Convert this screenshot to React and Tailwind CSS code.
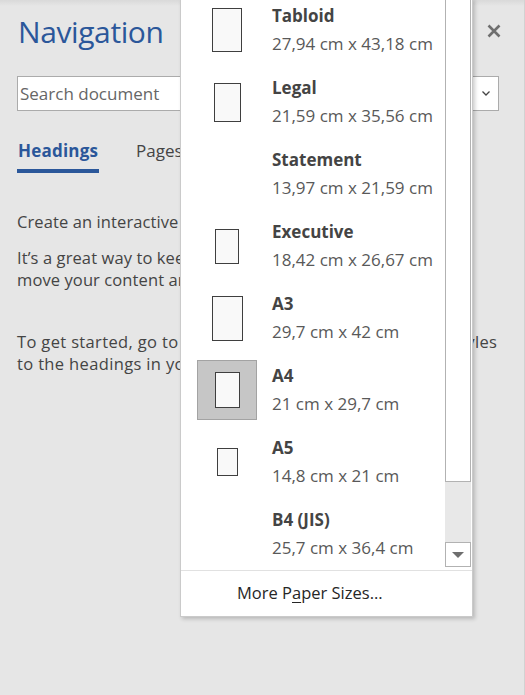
import React from 'react';

const sizes = [
  { name: 'Tabloid', dims: '27,94 cm x 43,18 cm', w: 30, h: 44 },
  { name: 'Legal', dims: '21,59 cm x 35,56 cm', w: 27, h: 39 },
  { name: 'Statement', dims: '13,97 cm x 21,59 cm' },
  { name: 'Executive', dims: '18,42 cm x 26,67 cm', w: 24, h: 35 },
  { name: 'A3', dims: '29,7 cm x 42 cm', w: 31, h: 45 },
  { name: 'A4', dims: '21 cm x 29,7 cm', w: 25, h: 36, selected: true },
  { name: 'A5', dims: '14,8 cm x 21 cm', w: 21, h: 28 },
  { name: 'B4 (JIS)', dims: '25,7 cm x 36,4 cm' },
];

const font = { fontFamily: '"Open Sans", "Noto Sans", sans-serif' };

function PaperIcon({ size }) {
  return (
    <div
      className={
        size.selected
          ? 'w-[60px] h-[60px] flex items-center justify-center bg-[#c6c6c6] border border-[#a3a3a3]'
          : 'w-[60px] h-[60px] flex items-center justify-center'
      }
    >
      {size.w && (
        <div
          className="bg-[#f9f9f9] border-[1.5px] border-[#3f3f3f]"
          style={{ width: size.w, height: size.h }}
        />
      )}
    </div>
  );
}

function SizeRow({ size }) {
  return (
    <div className="h-[72px] flex items-center">
      <div className="w-[76px] pl-[16px] shrink-0">
        <PaperIcon size={size} />
      </div>
      <div className="pl-[15px] flex flex-col mt-[-1px]">
        <span className="text-[17px] leading-[28px] font-bold text-[#444444]">{size.name}</span>
        <span className="text-[17px] leading-[28px] text-[#595959]">{size.dims}</span>
      </div>
    </div>
  );
}

export default function App() {
  return (
    <div className="relative w-[525px] h-[695px] overflow-hidden bg-[#e6e6e6] border-r border-[#d2d2d2]" style={font}>
      <div className="absolute left-0 top-0 w-full h-[6px] bg-gradient-to-b from-[#d9d9d9] to-transparent" />

      {/* Navigation pane */}
      <div className="pl-[17px] pr-[25px]">
        <div className="flex items-start justify-between pt-[12px]">
          <h1 className="text-[30px] leading-[40px] tracking-[-0.4px] text-[#2b579a] pl-[1px]">Navigation</h1>
          <svg width="14" height="14" viewBox="0 0 14 14" className="mt-[12px] mr-[-2px]">
            <path d="M1.5 1.5 L12.5 12.5 M12.5 1.5 L1.5 12.5" stroke="#6f6f6f" strokeWidth="2.6" />
          </svg>
        </div>
        <div className="mt-[24px] h-[35px] bg-white border border-[#ababab] flex items-center justify-between">
          <span className="pl-[2px] text-[17px] text-[#666666]">Search document</span>
          <svg width="8" height="5" viewBox="0 0 8 5" className="mr-[8px]">
            <path d="M0.5 0.5 L4 4 L7.5 0.5" stroke="#444" strokeWidth="1.3" fill="none" />
          </svg>
        </div>
        <div className="mt-[27px] flex gap-[37px] text-[17px]">
          <div className="flex flex-col">
            <span className="font-bold text-[#2b579a] leading-[25px] pl-[1px] tracking-[0.2px]">Headings</span>
            <span className="mt-[6px] h-[4px] w-[82px] bg-[#2b579a]" />
          </div>
          <span className="text-[#444444] leading-[25px]">Pages</span>
        </div>
        <div className="mt-[38px] text-[16.5px] leading-[22px] tracking-[0.1px] text-[#444444] whitespace-nowrap">
          <p>Create an interactive outline of your document.</p>
          <p className="mt-[14px]">
            It’s a great way to keep track of where you are or quickly
            <br />
            move your content around.
          </p>
          <p className="mt-[40px] tracking-[0.35px]">
            To get started, go to the Home tab and apply Heading styles
            <br />
            to the headings in your document.
          </p>
        </div>
      </div>

      {/* Paper size menu */}
      <div className="absolute left-[180px] top-[-2px] w-[293px] h-[619px] bg-white border border-[#cacaca] shadow-[2px_2px_4px_rgba(0,0,0,0.2)] flex flex-col">
        <div className="h-[571px] flex">
          <div className="flex-1 overflow-hidden">
            <div className="mt-[-5px]">
              {sizes.map((s) => (
                <SizeRow key={s.name} size={s} />
              ))}
            </div>
          </div>
          <div className="w-[26px] mr-[1px] flex flex-col">
            <div className="h-[483px] bg-white border border-[#b2b2b2]" />
            <div className="flex-1 bg-[#e8e8e8]" />
            <div className="h-[25px] bg-white border border-[#b2b2b2] flex items-center justify-center">
              <svg width="12" height="6" viewBox="0 0 12 6">
                <path d="M0 0 L12 0 L6 6 Z" fill="#6e6e6e" />
              </svg>
            </div>
            <div className="h-[3px]" />
          </div>
        </div>
        <div className="flex-1 border-t border-[#e1e1e1] flex items-center pl-[56px]">
          <span className="text-[16.5px] text-[#262626]">
            More P<span className="underline underline-offset-[3px]">a</span>per Sizes...
          </span>
        </div>
      </div>
    </div>
  );
}
